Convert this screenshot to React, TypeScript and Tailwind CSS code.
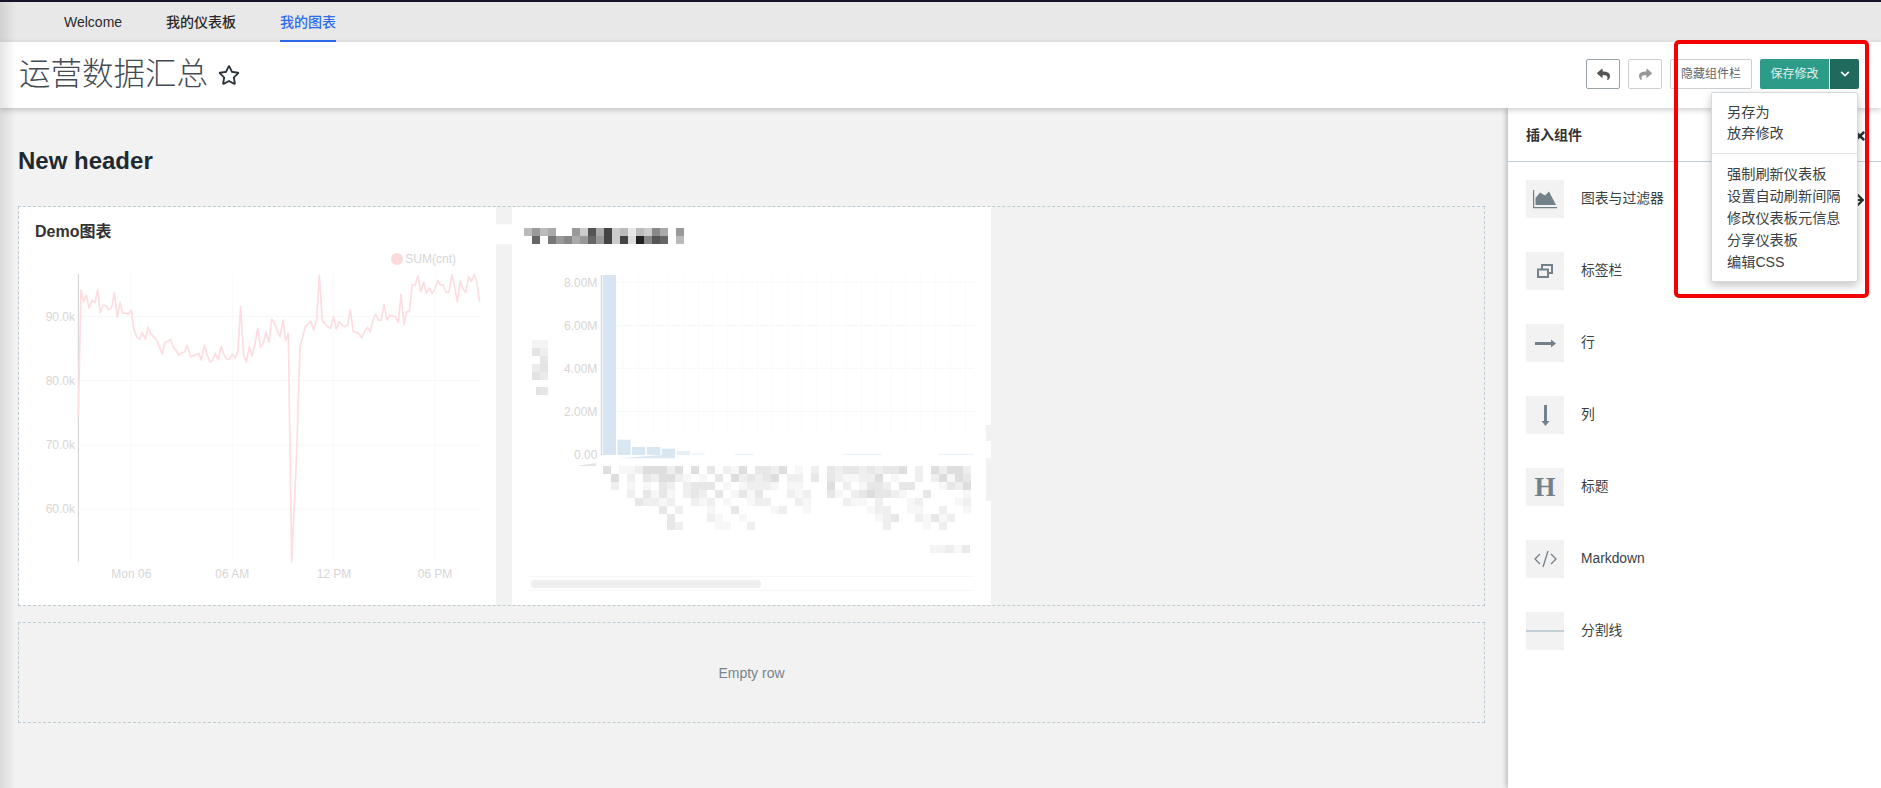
import { FaChevronDown, FaArrowRight, FaRegStar, FaReply, FaShare, FaTimes } from 'react-icons/fa'

/** Mosaic blur left in the second chart: a=darkest, d=faintest, .=nothing */
const MOSAIC_SHADES: Record<string, string> = { a: '#dedede', b: '#e7e7e7', c: '#efefef', d: '#f7f7f7' }
const MOSAIC_ROWS = [
    'a.ddcaaaca.a.b.cda.bbca.d.c.bcbbcbcbba.c.acaac',
    '.a.c.bcaacd.d.b.acbcba.cc.b.bcddcca.d..c.cadab',
    '.c.d.d.bc.cbbb.d.dcccd.dd...a.c.dbbc.bb...dbca',
    '...c.bdbd.cbc.b.dbdb...cdc..bd.cbabbcd..b....d',
    '....bccdc..cdc.d..dcc...cd....cdd.c...dc....dc',
    '.......b.c...d..b....dc..d.......dcc..dd..c..d',
    '........b....cd..d................dcb..cdbdc..',
    '........bc....dd..c................c....d.c...',
]

const LINE_POINTS =
    '235,530 243,150 251,185 259,165 267,205 276,180 285,188 293,147 301,218 310,195 318,197 326,210 335,202 343,158 352,232 360,188 369,220 377,220 385,223 394,210 402,270 410,290 419,298 427,278 436,297 444,262 453,282 461,290 470,300 478,320 487,342 495,307 504,304 512,298 520,322 529,332 537,346 545,338 554,336 562,315 571,350 579,348 596,340 604,360 613,315 621,342 630,367 638,360 646,340 655,360 663,318 672,345 680,357 689,358 697,342 706,354 714,332 722,200 731,345 739,366 748,320 756,348 765,310 773,265 781,322 790,310 798,276 807,307 815,237 823,248 832,272 840,290 849,240 857,302 865,280 875,965 890,640 900,322 916,260 933,245 941,270 950,240 958,105 967,243 975,250 984,262 992,265 1000,230 1009,268 1017,245 1026,255 1034,260 1043,255 1051,210 1060,276 1068,276 1077,282 1085,293 1094,275 1102,262 1111,275 1119,240 1127,222 1136,242 1144,240 1152,193 1161,240 1169,226 1186,230 1195,247 1203,163 1212,254 1220,215 1228,215 1237,133 1245,136 1254,108 1262,155 1271,126 1279,160 1287,144 1296,160 1304,150 1313,122 1321,134 1330,136 1338,157 1347,156 1356,104 1364,140 1372,186 1381,122 1389,147 1397,158 1406,110 1414,125 1423,102 1431,130 1439,187'

const TITLE_BLOCKS: [number, number, string][] = [
    [102, 82, '#bbb'], [126, 82, '#999'], [150, 82, '#bbb'], [174, 82, '#aaa'], [246, 82, '#999'], [270, 82, '#ccc'],
    [294, 82, '#555'], [318, 82, '#aaa'], [342, 82, '#444'], [366, 82, '#ccc'], [390, 82, '#bbb'], [414, 82, '#e8e8e8'],
    [438, 82, '#bbb'], [462, 82, '#ccc'], [486, 82, '#888'], [510, 82, '#aaa'], [558, 82, '#999'],
    [126, 106, '#666'], [174, 106, '#777'], [198, 106, '#999'], [222, 106, '#888'], [246, 106, '#aaa'], [270, 106, '#999'],
    [294, 106, '#666'], [318, 106, '#999'], [342, 106, '#444'], [366, 106, '#ccc'], [390, 106, '#444'], [414, 106, '#ddd'],
    [438, 106, '#222'], [462, 106, '#888'], [486, 106, '#555'], [510, 106, '#666'], [558, 106, '#bbb'],
]

function LineChart() {
    return (
        <svg viewBox="57 12 1431 1080" className="block w-[477px] h-[360px]">
            {[229, 421, 615, 807].map((y) => (
                <line key={y} x1="236" x2="1440" y1={y} y2={y} stroke="#f7f7f7" strokeWidth="3" />
            ))}
            {[394, 697, 1000, 1306].map((x) => (
                <line key={x} x1={x} x2={x} y1="102" y2="965" stroke="#f9f9f9" strokeWidth="3" />
            ))}
            <line x1="235" x2="235" y1="102" y2="965" stroke="#cfcfcf" strokeWidth="3" />
            <polyline points={LINE_POINTS} fill="none" stroke="#fddde0" strokeWidth="5" strokeLinejoin="round" />
            <g fill="#d6d6d6" fontSize="36" fontFamily="'Liberation Sans', sans-serif">
                {[['90.0k', 229], ['80.0k', 421], ['70.0k', 615], ['60.0k', 807]].map(([label, y]) => (
                    <text key={label} x="225" y={Number(y) + 13} textAnchor="end">{label}</text>
                ))}
                {[['Mon 06', 394], ['06 AM', 697], ['12 PM', 1002], ['06 PM', 1305]].map(([label, x]) => (
                    <text key={label} x={x} y="1013" textAnchor="middle">{label}</text>
                ))}
                <text x="1216" y="69">SUM(cnt)</text>
            </g>
            <circle cx="1191" cy="57" r="18" fill="#fcdadc" />
        </svg>
    )
}

function BarChart() {
    const verticals = [400, 445, 490, 535, 580, 625, 668, 712, 757, 802, 847, 892, 935, 980, 1025, 1069, 1115, 1160, 1203, 1247, 1291, 1337, 1382, 1427]
    const bars = [
        [338, 222, '#d6e5f1'], [382, 716, '#d9e7f2'], [426, 738, '#d9e7f2'], [471, 738, '#d9e7f2'],
        [515, 743, '#d9e7f2'], [560, 750, '#e6f0f7'], [604, 755, '#f2f7fb'],
    ] as const
    return (
        <svg viewBox="66 18 1437 1197" className="block w-[479px] h-[399px] overflow-visible">
            {/* Scraps of the blur: white over the gutter, gutter colour bitten out of the card */}
            <rect x="6" y="70" width="60" height="60" fill="#ffffff" />
            <rect x="1488" y="672" width="15" height="48" fill="#f2f2f2" />
            <rect x="1488" y="770" width="15" height="130" fill="#f2f2f2" />
            <g shapeRendering="crispEdges">
                {TITLE_BLOCKS.map(([x, y, fill]) => (
                    <rect key={`${x}-${y}`} x={x} y={y} width="24" height="24" fill={fill} />
                ))}
                {[[126, 417, '#f4f4f4'], [150, 417, '#f4f4f4'], [126, 441, '#e4e4e4'], [150, 441, '#eeeeee'], [150, 465, '#e6e6e6'], [126, 489, '#ececec'], [150, 489, '#e4e4e4'], [126, 513, '#e2e2e2'], [150, 513, '#eaeaea'], [138, 558, '#e2e2e2'], [150, 558, '#e6e6e6']].map(([x, y, fill]) => (
                    <rect key={`${x}-${y}`} x={x} y={y} width="24" height="24" fill={String(fill)} />
                ))}
                {MOSAIC_ROWS.flatMap((row, r) =>
                    row.split('').map((c, i) =>
                        c === '.' ? null : <rect key={`${r}-${i}`} x={339 + i * 24} y={795 + r * 24} width="24" height="24" fill={MOSAIC_SHADES[c]} />
                    )
                )}
                {[[1320, '#f4f4f4'], [1344, '#f4f4f4'], [1368, '#eeeeee'], [1392, '#f8f8f8'], [1416, '#eaeaea']].map(([x, fill]) => (
                    <rect key={String(x)} x={x} y="1033" width="24" height="24" fill={String(fill)} />
                ))}
            </g>
            {[244, 373, 502, 631].map((y) => (
                <line key={y} x1="334" x2="1452" y1={y} y2={y} stroke="#f7f7f7" strokeWidth="3" />
            ))}
            {verticals.map((x) => (
                <line key={x} x1={x} x2={x} y1="222" y2="700" stroke="#fbfbfb" strokeWidth="3" />
            ))}
            {bars.map(([x, y, fill]) => (
                <rect key={x} x={x} y={y} width="40" height={762 - y} fill={fill} />
            ))}
            <polygon points="385,772 515,762 555,762 555,772" fill="#d9e7f2" />
            <polygon points="260,795 318,786 318,795" fill="#e4e4e4" />
            <line x1="334" x2="334" y1="222" y2="762" stroke="#cfcfcf" strokeWidth="3" />
            {[[735, 790], [1060, 1175], [1345, 1450]].map(([a, b]) => (
                <line key={a} x1={a} x2={b} y1="760" y2="760" stroke="#e6eff6" strokeWidth="3" />
            ))}
            <g fill="#d6d6d6" fontSize="36" fontFamily="'Liberation Sans', sans-serif" textAnchor="end">
                {[['8.00M', 244], ['6.00M', 373], ['4.00M', 502], ['2.00M', 631], ['0.00', 761]].map(([label, y]) => (
                    <text key={label} x="322" y={Number(y) + 13}>{label}</text>
                ))}
            </g>
            <line x1="115" x2="1452" y1="1126" y2="1126" stroke="#f6f6f6" strokeWidth="3" />
            <line x1="115" x2="1452" y1="1168" y2="1168" stroke="#f6f6f6" strokeWidth="3" />
            <rect x="122" y="1137" width="691" height="24" rx="12" fill="#efefef" />
        </svg>
    )
}

function IconBox({ children }: { children: React.ReactNode }) {
    return <div className="w-[38px] h-[38px] bg-[#f2f2f2] flex items-center justify-center text-[#73828a] shrink-0">{children}</div>
}

const COMPONENTS: [string, React.ReactNode][] = [
    ['图表与过滤器', (
        <svg width="24" height="19" viewBox="0 0 24 19">
            <path d="M0.6 0v17.6H24" fill="none" stroke="currentColor" strokeWidth="1.2" />
            <path d="M2.5 15V8L7 2.5 12 5.5 16 1.5 23 15z" fill="currentColor" />
        </svg>
    )],
    ['标签栏', (
        <svg width="16" height="14" viewBox="0 0 16 14" fill="none" stroke="currentColor" strokeWidth="2">
            <path d="M5 5V1h10v8h-4" />
            <rect x="1" y="5.5" width="10" height="7.5" />
        </svg>
    )],
    ['行', <svg width="21" height="9" viewBox="0 0 21 9"><path d="M0 3h16V0.5l5 4-5 4V6H0z" fill="currentColor" /></svg>],
    ['列', <svg width="9" height="21" viewBox="0 0 9 21"><path d="M3 0v16H0.5l4 5 4-5H6V0z" fill="currentColor" /></svg>],
    ['标题', <span className="font-['Liberation_Serif',serif] font-bold text-[27px] leading-none">H</span>],
    ['Markdown', <svg width="23" height="18" viewBox="0 0 23 18" fill="none" stroke="currentColor" strokeWidth="1.3"><path d="M6 4L1 9l5 5M17 4l5 5-5 5M14 1L9 17" /></svg>],
    ['分割线', <div className="w-full h-[2px] bg-[#c3d0d8]" />],
]

export default function App() {
    return (
        <div className="relative w-[1881px] h-[788px] overflow-hidden bg-[#f2f2f2] flex flex-col font-['Liberation_Sans','Noto_Sans_CJK_SC',sans-serif] text-[#263238]">
            {/* Top nav */}
            <nav className="h-[42px] shrink-0 bg-[#e8e8e8] border-t-2 border-[#15132a] flex gap-[44px] pl-[64px] text-sm">
                <a className="h-10 flex items-center text-[#2a2a2a]">Welcome</a>
                <a className="h-10 flex items-center text-[#2a2a2a] font-medium">我的仪表板</a>
                <a className="h-10 flex items-center text-[#2e6bf0] font-medium border-b-2 border-[#2e6bf0] pt-[2px]">我的图表</a>
            </nav>

            {/* Dashboard header */}
            <header className="relative z-10 h-[66px] shrink-0 bg-white shadow-[0_2px_6px_rgba(0,0,0,0.2)] flex items-center pl-[19px] pr-[22px]">
                <h1 className="text-[31.5px] font-light text-[#444b50] leading-none">运营数据汇总</h1>
                <FaRegStar className="ml-[10px] text-[#263238]" size={22} />
                <div className="ml-auto flex items-center mt-[-2px]">
                    <button className="w-[34px] h-[30px] border border-[#9aa3a8] rounded-[2px] flex items-center justify-center text-[#555]"><FaReply size={13} /></button>
                    <button className="w-[34px] h-[30px] ml-2 border border-[#c9cfd2] rounded-[2px] flex items-center justify-center text-[#999]"><FaShare size={13} /></button>
                    <button className="w-[82px] h-[30px] ml-2 border border-[#c9cfd2] rounded-[2px] text-[12px] text-[#666]">隐藏组件栏</button>
                    <button className="w-[69px] h-[30px] ml-2 bg-[#2c9c88] rounded-l-[2px] text-[12px] text-white/85">保存修改</button>
                    <button className="w-[30px] h-[30px] bg-[#1f6a5c] border-l border-white rounded-r-[2px] flex items-center justify-center text-white"><FaChevronDown size={10} /></button>
                </div>
            </header>

            <div className="flex-1 flex min-h-0">
                {/* Canvas */}
                <main className="flex-1 min-w-0 pl-[18px] pr-[23px]">
                    <h2 className="text-2xl font-bold text-[#1f2a30] pt-[40px] h-[98px] leading-[26px]">New header</h2>
                    <div className="h-[400px] border border-dashed border-[#bccbd2] flex">
                        <section className="w-[477px] bg-white">
                            <h3 className="pt-[13px] pl-4 h-[37px] text-base leading-6 font-bold text-[#333]">Demo图表</h3>
                            <LineChart />
                        </section>
                        <section className="ml-4 w-[479px] bg-white">
                            <BarChart />
                        </section>
                    </div>
                    <div className="mt-4 h-[101px] border border-dashed border-[#bccbd2] flex items-center justify-center text-sm text-[#77848b]">Empty row</div>
                </main>

                {/* Insert components panel */}
                <aside className="relative w-[373px] shrink-0 bg-white shadow-[-2px_0_5px_rgba(0,0,0,0.22)]">
                    <div className="h-[54px] border-b border-[#c3ced6] pl-[18px] flex items-center text-sm font-bold text-[#333]">插入组件</div>
                    <FaTimes className="absolute left-[345px] top-[21px] text-[#263238]" size={14} />
                    <FaArrowRight className="absolute left-[343px] top-[85px] text-[#263238]" size={14} />
                    <ul className="pt-[18px] pl-[18px] flex flex-col gap-[34px]">
                        {COMPONENTS.map(([label, icon]) => (
                            <li key={label} className="flex items-center gap-[17px] text-[13.8px] text-[#3a3f44]">
                                <IconBox>{icon}</IconBox>
                                {label}
                            </li>
                        ))}
                    </ul>
                </aside>
            </div>

            {/* Left edge shade from the window behind */}
            <div className="absolute left-0 top-[2px] bottom-0 w-4 bg-gradient-to-r from-black/10 to-transparent pointer-events-none z-20" />

            {/* Save menu */}
            <div className="absolute z-30 left-[1711px] top-[92px] w-[147px] h-[190px] bg-white border border-[#d5d9dc] rounded-[2px] shadow-[0_4px_10px_rgba(0,0,0,0.22)] pt-[9px] text-[14.2px] leading-[22px] text-[#3a3f44]">
                <div className="pl-[15px] h-[21px] leading-[21px]">另存为</div>
                <div className="pl-[15px] h-[21px] leading-[21px]">放弃修改</div>
                <div className="my-[9px] h-px bg-[#dfe3e5]" />
                <div className="pl-[15px]">强制刷新仪表板</div>
                <div className="pl-[15px]">设置自动刷新间隔</div>
                <div className="pl-[15px]">修改仪表板元信息</div>
                <div className="pl-[15px]">分享仪表板</div>
                <div className="pl-[15px]">编辑CSS</div>
            </div>

            {/* Red annotation box */}
            <div className="absolute z-40 left-[1674px] top-[40px] w-[195px] h-[258px] border-4 border-[#f50000] rounded-[5px] pointer-events-none" />
        </div>
    )
}
